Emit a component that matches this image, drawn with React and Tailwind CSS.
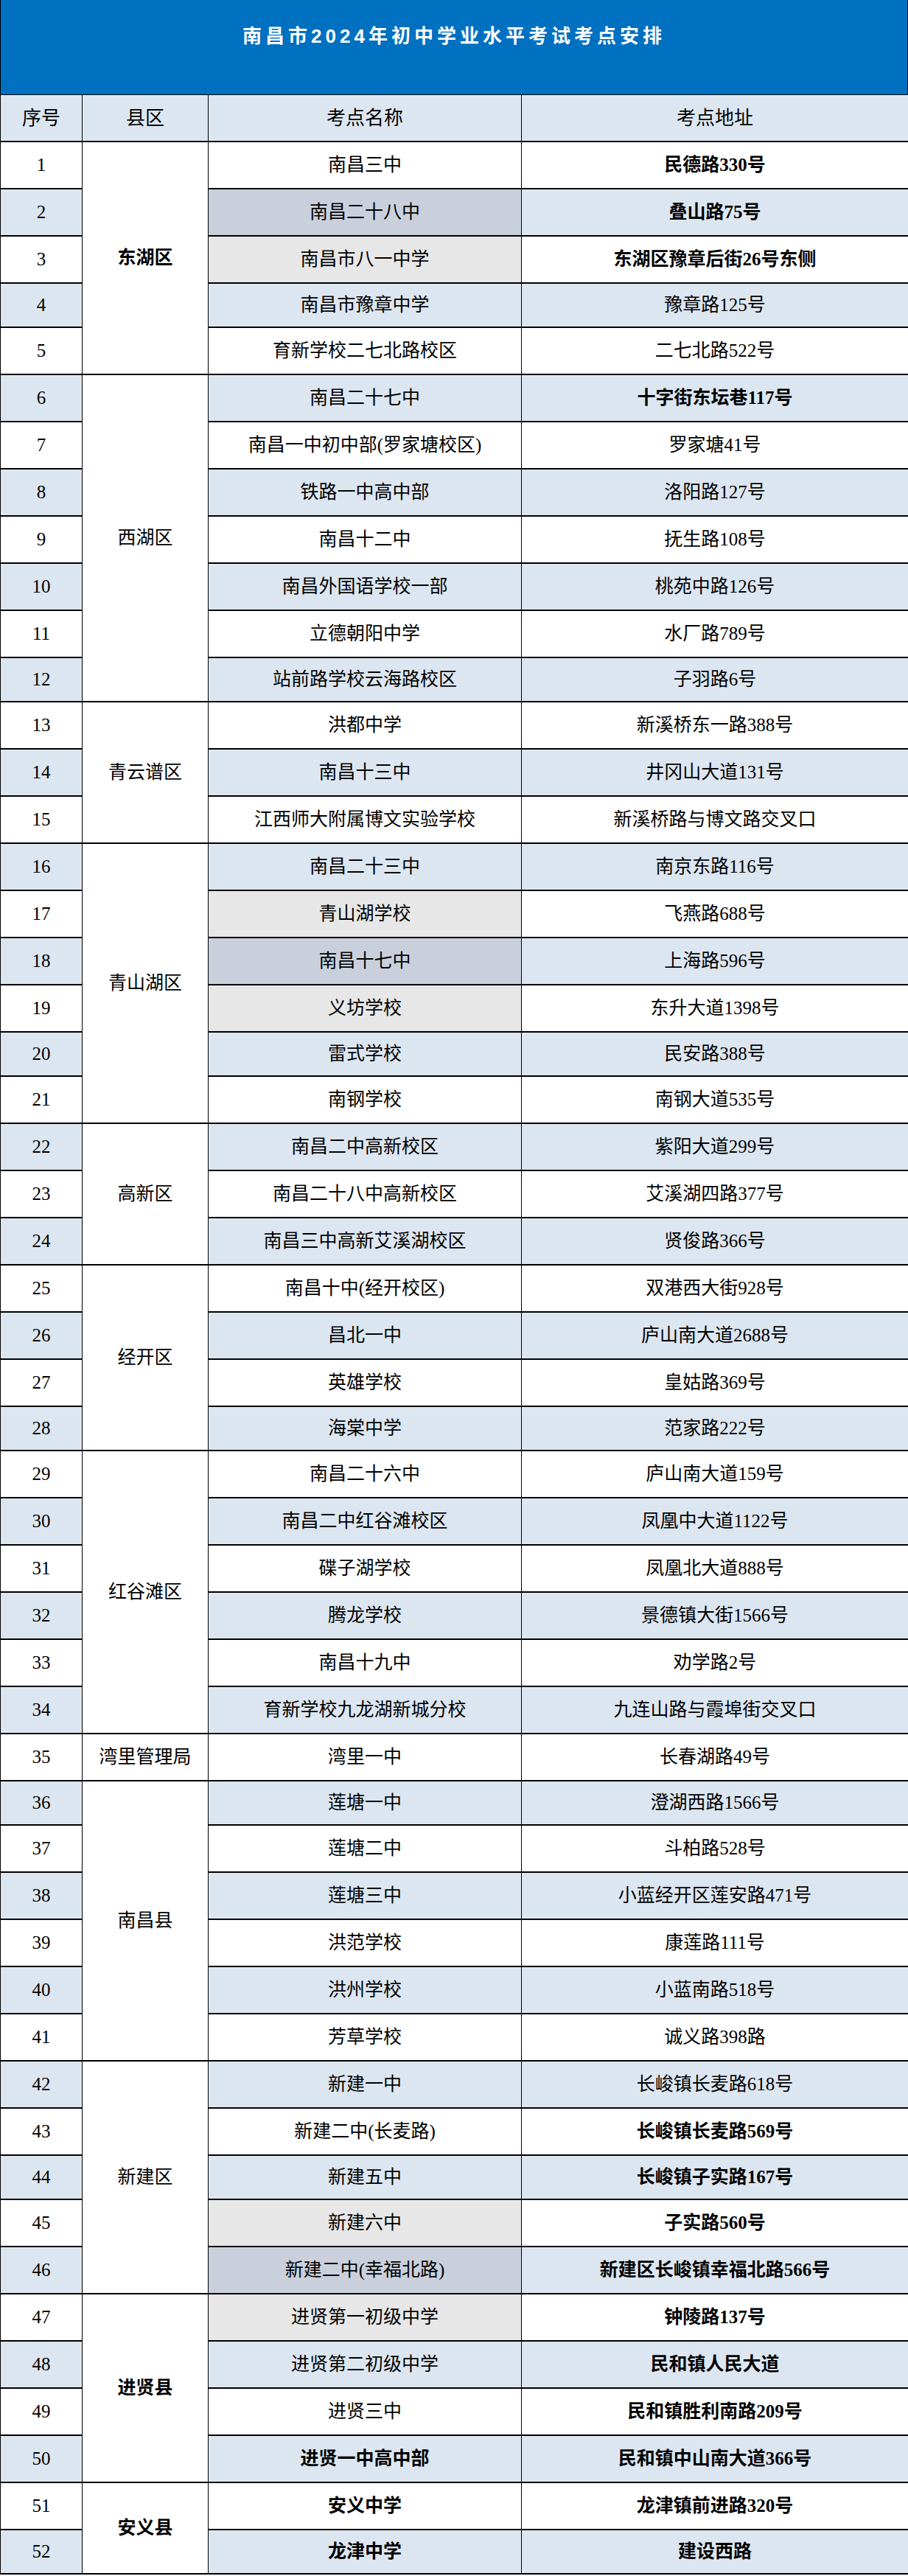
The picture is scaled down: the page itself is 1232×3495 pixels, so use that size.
import React from "react";

// 每组：县区 + 考点列表 [序号, 考点名称, 考点地址, 名称底色, 名称加粗, 地址加粗]
const groups = [
  {
    district: "东湖区",
    bold: true,
    rows: [
      ["南昌三中", "民德路330号", "", false, true],
      ["南昌二十八中", "叠山路75号", "dark", false, true],
      ["南昌市八一中学", "东湖区豫章后街26号东侧", "gray", false, true],
      ["南昌市豫章中学", "豫章路125号", "", false, false],
      ["育新学校二七北路校区", "二七北路522号", "", false, false],
    ],
  },
  {
    district: "西湖区",
    rows: [
      ["南昌二十七中", "十字街东坛巷117号", "", false, true],
      ["南昌一中初中部(罗家塘校区)", "罗家塘41号"],
      ["铁路一中高中部", "洛阳路127号"],
      ["南昌十二中", "抚生路108号"],
      ["南昌外国语学校一部", "桃苑中路126号"],
      ["立德朝阳中学", "水厂路789号"],
      ["站前路学校云海路校区", "子羽路6号"],
    ],
  },
  {
    district: "青云谱区",
    rows: [
      ["洪都中学", "新溪桥东一路388号"],
      ["南昌十三中", "井冈山大道131号"],
      ["江西师大附属博文实验学校", "新溪桥路与博文路交叉口"],
    ],
  },
  {
    district: "青山湖区",
    rows: [
      ["南昌二十三中", "南京东路116号"],
      ["青山湖学校", "飞燕路688号", "gray"],
      ["南昌十七中", "上海路596号", "dark"],
      ["义坊学校", "东升大道1398号", "gray"],
      ["雷式学校", "民安路388号"],
      ["南钢学校", "南钢大道535号"],
    ],
  },
  {
    district: "高新区",
    rows: [
      ["南昌二中高新校区", "紫阳大道299号"],
      ["南昌二十八中高新校区", "艾溪湖四路377号"],
      ["南昌三中高新艾溪湖校区", "贤俊路366号"],
    ],
  },
  {
    district: "经开区",
    rows: [
      ["南昌十中(经开校区)", "双港西大街928号"],
      ["昌北一中", "庐山南大道2688号"],
      ["英雄学校", "皇姑路369号"],
      ["海棠中学", "范家路222号"],
    ],
  },
  {
    district: "红谷滩区",
    rows: [
      ["南昌二十六中", "庐山南大道159号"],
      ["南昌二中红谷滩校区", "凤凰中大道1122号"],
      ["碟子湖学校", "凤凰北大道888号"],
      ["腾龙学校", "景德镇大街1566号"],
      ["南昌十九中", "劝学路2号"],
      ["育新学校九龙湖新城分校", "九连山路与霞埠街交叉口"],
    ],
  },
  {
    district: "湾里管理局",
    rows: [["湾里一中", "长春湖路49号"]],
  },
  {
    district: "南昌县",
    rows: [
      ["莲塘一中", "澄湖西路1566号"],
      ["莲塘二中", "斗柏路528号"],
      ["莲塘三中", "小蓝经开区莲安路471号"],
      ["洪范学校", "康莲路111号"],
      ["洪州学校", "小蓝南路518号"],
      ["芳草学校", "诚义路398路"],
    ],
  },
  {
    district: "新建区",
    rows: [
      ["新建一中", "长峻镇长麦路618号"],
      ["新建二中(长麦路)", "长峻镇长麦路569号", "", false, true],
      ["新建五中", "长峻镇子实路167号", "", false, true],
      ["新建六中", "子实路560号", "gray", false, true],
      ["新建二中(幸福北路)", "新建区长峻镇幸福北路566号", "dark", false, true],
    ],
  },
  {
    district: "进贤县",
    bold: true,
    rows: [
      ["进贤第一初级中学", "钟陵路137号", "gray", false, true],
      ["进贤第二初级中学", "民和镇人民大道", "", false, true],
      ["进贤三中", "民和镇胜利南路209号", "", false, true],
      ["进贤一中高中部", "民和镇中山南大道366号", "", true, true],
    ],
  },
  {
    district: "安义县",
    bold: true,
    rows: [
      ["安义中学", "龙津镇前进路320号", "", true, true],
      ["龙津中学", "建设西路", "", true, true],
    ],
  },
];

const spanClass = {
  1: "row-span-1",
  2: "row-span-2",
  3: "row-span-3",
  4: "row-span-4",
  5: "row-span-5",
  6: "row-span-6",
  7: "row-span-7",
};

const nameBg = {
  gray: "bg-[#e7e7e7]",
  dark: "bg-[#c9d0dc]",
};

const cell =
  "flex items-center justify-center border-r border-b-2 border-black text-[25px] text-black whitespace-nowrap";

export default function App() {
  let no = 0;

  return (
    <div className="w-[1232px] bg-white font-['Liberation_Serif','Noto_Sans_CJK_SC',serif]">
      {/* 标题 */}
      <div className="h-[129px] bg-[#0070c0] border-l border-r border-b border-black pt-[31px]">
        <h1 className="text-center text-white text-[26px] leading-[36px] font-bold tracking-[5px] font-['Liberation_Sans','Noto_Sans_CJK_SC',sans-serif]">
          南昌市2024年初中学业水平考试考点安排
        </h1>
      </div>

      {/* 表格 */}
      <div className="grid grid-cols-[111px_171px_425px_525px] border-l border-black">
        {["序号", "县区", "考点名称", "考点地址"].map((t) => (
          <div key={t} className={`${cell} h-[64px] bg-[#dce6f1] text-[26px]`}>
            {t}
          </div>
        ))}

        {groups.map((g) =>
          g.rows.map((r, idx) => {
            no += 1;
            const [name, addr, bg = "", nameBold = false, addrBold = false] = r;
            const h = no % 8 === 4 ? "h-[60px]" : "h-[64px]";
            const stripe = no % 2 === 0 ? "bg-[#dce6f1]" : "bg-white";
            return (
              <React.Fragment key={no}>
                <div className={`${cell} ${h} ${stripe} col-start-1`}>{no}</div>
                {idx === 0 && (
                  <div
                    className={`${cell} ${spanClass[g.rows.length]} col-start-2 bg-white ${
                      g.bold ? "font-bold" : ""
                    }`}
                  >
                    {g.district}
                  </div>
                )}
                <div
                  className={`${cell} ${h} col-start-3 ${bg ? nameBg[bg] : stripe} ${
                    nameBold ? "font-bold" : ""
                  }`}
                >
                  {name}
                </div>
                <div
                  className={`${cell} ${h} col-start-4 ${stripe} ${
                    addrBold ? "font-bold" : ""
                  }`}
                >
                  {addr}
                </div>
              </React.Fragment>
            );
          })
        )}
      </div>
    </div>
  );
}
